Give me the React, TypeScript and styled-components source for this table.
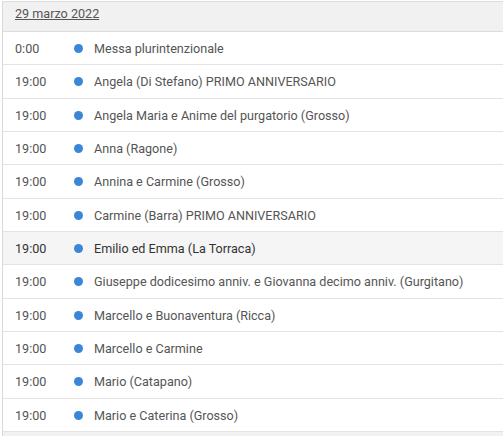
import styled, { createGlobalStyle } from 'styled-components';

const GlobalStyle = createGlobalStyle`
  html, body {
    margin: 0;
    padding: 0;
    background: #fff;
    overflow: hidden;
  }
  body {
    font-family: Roboto, "Liberation Sans", Arial, sans-serif;
  }
`;

interface EventItem {
  time: string;
  title: string;
  active?: boolean;
}

const events: EventItem[] = [
  { time: '0:00', title: 'Messa plurintenzionale' },
  { time: '19:00', title: 'Angela (Di Stefano) PRIMO ANNIVERSARIO' },
  { time: '19:00', title: 'Angela Maria e Anime del purgatorio (Grosso)' },
  { time: '19:00', title: 'Anna (Ragone)' },
  { time: '19:00', title: 'Annina e Carmine (Grosso)' },
  { time: '19:00', title: 'Carmine (Barra) PRIMO ANNIVERSARIO' },
  { time: '19:00', title: 'Emilio ed Emma (La Torraca)', active: true },
  { time: '19:00', title: 'Giuseppe dodicesimo anniv. e Giovanna decimo anniv. (Gurgitano)' },
  { time: '19:00', title: 'Marcello e Buonaventura (Ricca)' },
  { time: '19:00', title: 'Marcello e Carmine' },
  { time: '19:00', title: 'Mario (Catapano)' },
  { time: '19:00', title: 'Mario e Caterina (Grosso)' },
];

const App = () => {
  return (
    <>
      <GlobalStyle />
      <Frame>
        <Agenda>
          <DayHeader>
            <DateLink>29 marzo 2022</DateLink>
          </DayHeader>
          {events.map((ev, i) => (
            <Row key={i} $active={ev.active}>
              <Time>{ev.time}</Time>
              <DotCell>
                <Dot />
              </DotCell>
              <Title>{ev.title}</Title>
            </Row>
          ))}
          <DayHeader />
        </Agenda>
      </Frame>
    </>
  );
};

const Frame = styled.div`
  width: 503px;
  height: 436px;
  overflow: hidden;
  padding-top: 1px;
  box-sizing: border-box;
`;

const Agenda = styled.div`
  margin-left: 2px;
  border-left: 1px solid #d9d9d9;
  border-top: 1px solid #dcdcdc;
  color: #555;
  font-size: 12.6px;
`;

const DayHeader = styled.div`
  height: 30px;
  box-sizing: border-box;
  background: #f1f1f1;
  border-bottom: 1px solid #dcdcdc;
  display: flex;
  align-items: center;
  padding-left: 12px;
  padding-bottom: 6px;
`;

const DateLink = styled.span`
  color: #555;
  text-decoration: underline;
`;

const Row = styled.div<{ $active?: boolean }>`
  height: 33.33px;
  box-sizing: border-box;
  display: flex;
  align-items: center;
  padding-top: 1px;
  border-bottom: 1px solid #e3e3e3;
  background: ${p => (p.$active ? '#f5f5f5' : '#fff')};
  color: ${p => (p.$active ? '#333' : '#555')};
`;

const Time = styled.div`
  width: 58px;
  padding-left: 12px;
  white-space: nowrap;
`;

const DotCell = styled.div`
  width: 20px;
  display: flex;
  align-items: center;
  padding-left: 1px;
`;

const Dot = styled.span`
  width: 9px;
  height: 9px;
  border-radius: 50%;
  background: #3c86d6;
`;

const Title = styled.div`
  white-space: nowrap;
`;

export default App;
